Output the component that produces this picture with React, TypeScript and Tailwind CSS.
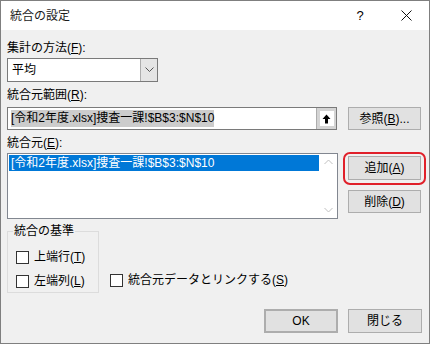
function CheckBox({ label, mnemonic, after = "" }: { label: string; mnemonic: string; after?: string }) {
  return (
    <div className="flex items-center h-[16px]">
      <div className="w-[13px] h-[13px] border border-[#333333] bg-white" />
      <span className="ml-[5px] leading-[16px]">
        {label}(<u>{mnemonic}</u>){after}
      </span>
    </div>
  )
}

function Btn({ children, className = "" }: { children: React.ReactNode; className?: string }) {
  return (
    <div className={`flex items-center justify-center bg-[#e1e1e1] border border-[#adadad] ${className}`}>
      {children}
    </div>
  )
}

export default function App() {
  const rangeText = "[令和2年度.xlsx]捜査一課!$B$3:$N$10"
  return (
    <div className="w-[430px] h-[344px] border border-[#7f7f7f] bg-[#f0f0f0] text-[12px] text-black font-['Liberation_Sans','Noto_Sans_CJK_JP',sans-serif] flex flex-col overflow-hidden">
      {/* Title bar */}
      <div className="h-[29px] bg-white flex items-center justify-between shrink-0">
        <span className="pl-[9px] text-[#1a1a1a]">統合の設定</span>
        <div className="flex h-full">
          <div className="w-[46px] flex items-center justify-center text-[13px]">?</div>
          <div className="w-[46px] flex items-center justify-center">
            <svg width="11" height="11" viewBox="0 0 11 11">
              <path d="M0.5 0.5 L10.5 10.5 M10.5 0.5 L0.5 10.5" stroke="#111" strokeWidth="1" />
            </svg>
          </div>
        </div>
      </div>

      <div className="flex flex-col px-[6px]">
        {/* Aggregation function */}
        <div className="mt-[10px] h-[16px] leading-[16px]">
          集計の方法(<u>F</u>):
        </div>
        <div className="mt-[2px] w-[151px] h-[24px] flex border border-[#7a7a7a] bg-white">
          <div className="flex-1 flex items-center pl-[4px]">平均</div>
          <div className="w-[17px] border-l border-[#adadad] bg-[#e5e5e5] flex items-center justify-center">
            <svg width="9" height="6" viewBox="0 0 9 6">
              <path d="M0.5 0.5 L4.5 4.5 L8.5 0.5" fill="none" stroke="#555" strokeWidth="1" />
            </svg>
          </div>
        </div>

        {/* Reference */}
        <div className="mt-[5px] h-[16px] leading-[16px]">
          統合元範囲(<u>R</u>):
        </div>
        <div className="mt-[4px] flex h-[23px]">
          <div className="w-[330px] flex border border-[#7a7a7a] bg-white">
            <div className="flex-1 flex items-center pl-[3px]">
              <span className="bg-[#cccccc] leading-[17px]">{rangeText}</span>
            </div>
            <div className="w-[20px] bg-[#d4d4d4] border-l border-[#adadad] flex items-center justify-center">
              <div className="w-[14px] h-[15px] bg-white flex items-center justify-center">
                <svg width="9" height="10" viewBox="0 0 9 10">
                  <path d="M4.5 0.5 L8.5 5 L6 5 L6 9.5 L3 9.5 L3 5 L0.5 5 Z" fill="#000" />
                </svg>
              </div>
            </div>
          </div>
          <Btn className="ml-[11px] w-[73px] h-[23px]">
            参照(<u>B</u>)...
          </Btn>
        </div>

        {/* All references */}
        <div className="mt-[5px] h-[16px] leading-[16px]">
          統合元(<u>E</u>):
        </div>
        <div className="mt-[2px] flex">
          <div className="w-[331px] h-[66px] flex border border-[#828790] bg-white">
            <div className="flex-1 p-[1px]">
              <div className="h-[16px] leading-[16px] bg-[#0078d7] text-white pl-[2px]">{rangeText}</div>
            </div>
            <div className="w-[17px] flex flex-col justify-between items-center py-[5px]">
              <svg width="9" height="6" viewBox="0 0 9 6">
                <path d="M0.5 5 L4.5 1 L8.5 5" fill="none" stroke="#c0c0c0" strokeWidth="1" />
              </svg>
              <svg width="9" height="6" viewBox="0 0 9 6">
                <path d="M0.5 1 L4.5 5 L8.5 1" fill="none" stroke="#c0c0c0" strokeWidth="1" />
              </svg>
            </div>
          </div>
          <div className="ml-[10px] w-[73px] flex flex-col">
            <div className="relative mt-[3px]">
              <Btn className="h-[24px]">
                追加(<u>A</u>)
              </Btn>
              <div className="absolute -left-[5px] -right-[5px] -top-[4px] -bottom-[5px] rounded-[7px] border-2 border-[#e0202a]" />
            </div>
            <Btn className="mt-[10px] h-[23px]">
              削除(<u>D</u>)
            </Btn>
          </div>
        </div>

        {/* Options */}
        <div className="mt-[12px] flex items-start">
          <div className="relative w-[92px] h-[62px] border border-[#dcdcdc]">
            <span className="absolute left-[5px] -top-[9px] h-[16px] leading-[16px] bg-[#f0f0f0] px-[1px]">統合の基準</span>
            <div className="absolute left-[8px] top-[17px] flex flex-col gap-[8px]">
              <CheckBox label="上端行" mnemonic="T" />
              <CheckBox label="左端列" mnemonic="L" />
            </div>
          </div>
          <div className="ml-[11px] mt-[41px]">
            <CheckBox label="統合元データとリンクする" mnemonic="S" />
          </div>
        </div>

        {/* Footer buttons */}
        <div className="mt-[16px] flex justify-end mr-[1px]">
          <Btn className="w-[74px] h-[24px] border-2 border-[#0078d7]">OK</Btn>
          <Btn className="ml-[10px] w-[74px] h-[24px]">閉じる</Btn>
        </div>
      </div>
    </div>
  )
}
